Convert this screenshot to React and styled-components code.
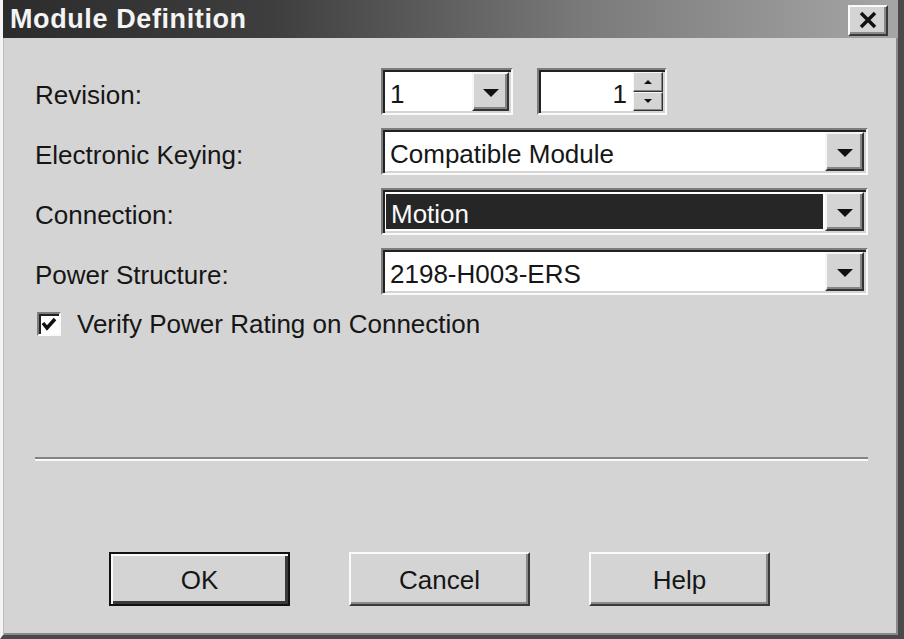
import React from "react";
import styled, { createGlobalStyle } from "styled-components";

const GlobalStyle = createGlobalStyle`
  html, body {
    margin: 0;
    padding: 0;
    background: #d4d4d4;
  }
  * { box-sizing: border-box; }
`;

const FONT = `"Liberation Sans", Arial, sans-serif`;

const Window = styled.div`
  width: 904px;
  height: 639px;
  background: #d4d4d4;
  border-left: 3px solid #f4f4f4;
  border-right: 6px solid #4a4a4a;
  border-bottom: 4px solid #4a4a4a;
  box-shadow: inset 1px 0 0 #bdbdbd, inset -2px 0 0 #8a8a8a, inset 0 -2px 0 #8a8a8a;
  display: flex;
  flex-direction: column;
  font-family: ${FONT};
  color: #161616;
  overflow: hidden;
`;

const TitleBar = styled.div`
  height: 38px;
  flex: none;
  display: flex;
  align-items: center;
  justify-content: space-between;
  padding: 0 10px 0 7px;
  background: linear-gradient(90deg, #2c2c2c 0%, #3e3e3e 30%, #7a7a7a 65%, #a6a6a6 100%);
`;

const Title = styled.div`
  color: #f4f4f4;
  font-weight: bold;
  font-size: 27px;
  letter-spacing: 0.6px;
  line-height: 1;
`;

const CloseButton = styled.div`
  width: 40px;
  height: 31px;
  margin-top: 2px;
  background: #d4d4d4;
  border: 2px solid;
  border-color: #fafafa #3a3a3a #3a3a3a #fafafa;
  box-shadow: inset -2px -2px 0 #8a8a8a;
  display: flex;
  align-items: center;
  justify-content: center;
`;

const Body = styled.div`
  flex: 1;
  display: flex;
  flex-direction: column;
  padding: 30px 30px 0 32px;
`;

const FormGrid = styled.div`
  display: grid;
  grid-template-columns: 346px 1fr;
  grid-auto-rows: 47px;
  row-gap: 13px;
  align-items: center;
`;

const Label = styled.div`
  font-size: 26px;
  line-height: 1;
  padding-top: 6px;
`;

const FieldRow = styled.div`
  display: flex;
  gap: 24px;
  height: 47px;
`;

const ComboBox = styled.div`
  width: ${(p) => (p.$w ? `${p.$w}px` : "100%")};
  height: 47px;
  background: #fff;
  border: 2px solid;
  border-color: #7c7c7c #fafafa #fafafa #7c7c7c;
  box-shadow: inset 2px 2px 0 #222, inset -2px -2px 0 #d4d4d4;
  padding: 2px;
  display: flex;
`;

const ComboText = styled.div`
  flex: 1;
  display: flex;
  align-items: center;
  justify-content: ${(p) => (p.$right ? "flex-end" : "flex-start")};
  font-size: 26px;
  padding: 5px 6px 0 5px;
  margin: ${(p) => (p.$selected ? "2px 2px 2px 1px" : "0")};
  background: ${(p) => (p.$selected ? "#262626" : "transparent")};
  color: ${(p) => (p.$selected ? "#fafafa" : "#161616")};
`;

const DropButton = styled.div`
  width: ${(p) => p.$w || 39}px;
  flex: none;
  background: #d4d4d4;
  border: 2px solid;
  border-color: #f6f6f6 #333 #333 #f6f6f6;
  box-shadow: inset -2px -2px 0 #858585;
  display: flex;
  align-items: center;
  justify-content: center;
`;

const Arrow = styled.div`
  width: 0;
  height: 0;
  border-left: 8px solid transparent;
  border-right: 8px solid transparent;
  border-top: 8px solid #111;
  margin-top: 2px;
`;

const SpinButtons = styled.div`
  width: 30px;
  flex: none;
  display: flex;
  flex-direction: column;
`;

const SpinHalf = styled.div`
  flex: 1;
  background: #d4d4d4;
  border: 1px solid;
  border-color: #f6f6f6 #333 #333 #f6f6f6;
  box-shadow: inset -1px -1px 0 #858585;
  display: flex;
  align-items: center;
  justify-content: center;
`;

const SmallArrow = styled.div`
  width: 0;
  height: 0;
  border-left: 4px solid transparent;
  border-right: 4px solid transparent;
  ${(p) => (p.$up ? "border-bottom: 4px solid #111;" : "border-top: 4px solid #111;")}
`;

const CheckRow = styled.div`
  display: flex;
  align-items: center;
  gap: 16px;
  margin-top: 14px;
  height: 30px;
  padding-left: 2px;
  font-size: 26px;
`;

const CheckBox = styled.div`
  width: 24px;
  height: 24px;
  background: #fff;
  border: 2px solid;
  border-color: #7c7c7c #fafafa #fafafa #7c7c7c;
  box-shadow: inset 2px 2px 0 #222;
  display: flex;
  align-items: center;
  justify-content: center;
`;

const Separator = styled.div`
  margin-top: 118px;
  height: 4px;
  border-top: 2px solid #838383;
  border-bottom: 2px solid #fafafa;
`;

const ButtonRow = styled.div`
  display: flex;
  gap: 59px;
  margin-top: 91px;
  padding-left: 74px;
`;

const Button = styled.div`
  width: 181px;
  height: 54px;
  background: #d4d4d4;
  border: 2px solid;
  border-color: ${(p) => (p.$default ? "#111" : "#fafafa #3a3a3a #3a3a3a #fafafa")};
  box-shadow: ${(p) =>
    p.$default
      ? "inset 2px 2px 0 #fafafa, inset -3px -3px 0 #3a3a3a"
      : "inset -2px -2px 0 #8a8a8a"};
  display: flex;
  align-items: center;
  justify-content: center;
  font-size: 26px;
  padding-top: 2px;
`;

const Combo = ({ value, selected, width, btn }) => (
  <ComboBox $w={width}>
    <ComboText $selected={selected}>{value}</ComboText>
    <DropButton $w={btn}>
      <Arrow />
    </DropButton>
  </ComboBox>
);

export default function App() {
  return (
    <>
      <GlobalStyle />
      <Window>
        <TitleBar>
          <Title>Module Definition</Title>
          <CloseButton>
            <svg width="20" height="18" viewBox="0 0 20 18">
              <path d="M3 2 L17 16 M17 2 L3 16" stroke="#111" strokeWidth="3.5" />
            </svg>
          </CloseButton>
        </TitleBar>
        <Body>
          <FormGrid>
            <Label>Revision:</Label>
            <FieldRow>
              <Combo value="1" width={132} btn={37} />
              <ComboBox $w={130}>
                <ComboText $right>1</ComboText>
                <SpinButtons>
                  <SpinHalf><SmallArrow $up /></SpinHalf>
                  <SpinHalf><SmallArrow /></SpinHalf>
                </SpinButtons>
              </ComboBox>
            </FieldRow>

            <Label>Electronic Keying:</Label>
            <Combo value="Compatible Module" />

            <Label>Connection:</Label>
            <Combo value="Motion" selected />

            <Label>Power Structure:</Label>
            <Combo value="2198-H003-ERS" />
          </FormGrid>

          <CheckRow>
            <CheckBox>
              <svg width="16" height="14" viewBox="0 0 16 14">
                <path d="M2 6 L6 11 L14 2" stroke="#111" strokeWidth="3.5" fill="none" />
              </svg>
            </CheckBox>
            <span>Verify Power Rating on Connection</span>
          </CheckRow>

          <Separator />

          <ButtonRow>
            <Button $default>OK</Button>
            <Button>Cancel</Button>
            <Button>Help</Button>
          </ButtonRow>
        </Body>
      </Window>
    </>
  );
}
